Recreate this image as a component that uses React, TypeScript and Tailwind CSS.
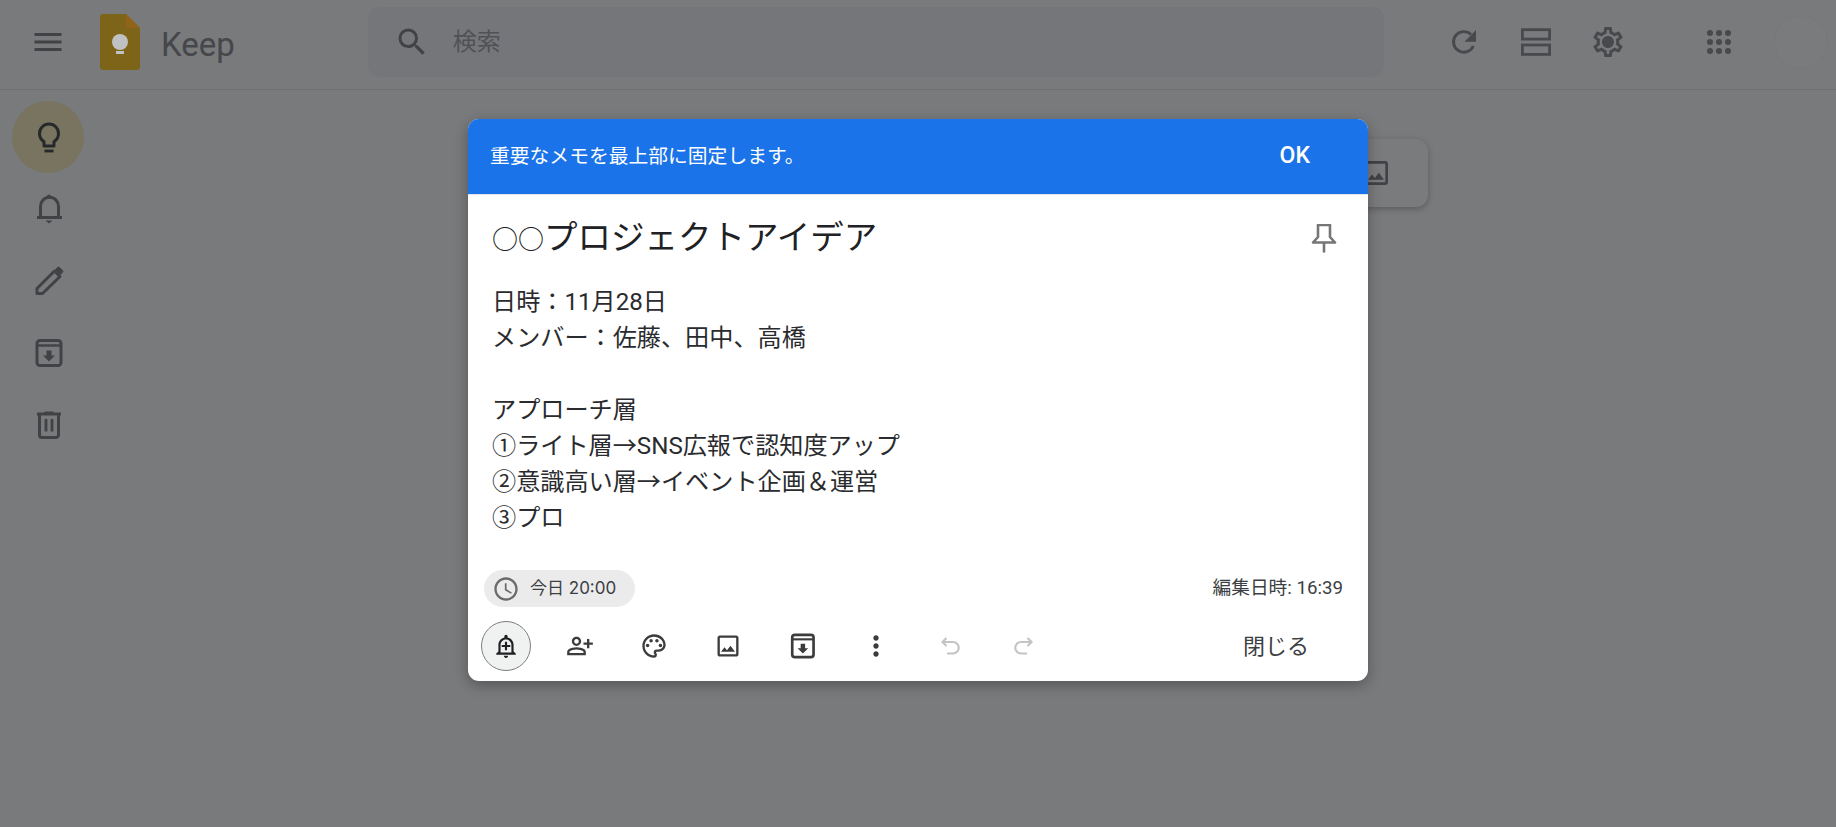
import React from "react";
import {
  MdMenu, MdSearch, MdOutlineSettings,
  MdOutlineImage, MdOutlineAddAlert, MdOutlinePersonAddAlt, MdOutlinePalette,
  MdMoreVert, MdOutlineAccessTime,
} from "react-icons/md";

const font = "[font-family:Roboto,'Noto_Sans_CJK_JP',sans-serif]";

type P = { className?: string };

function BulbIcon({ className }: P) {
  return (
    <svg width="36" height="36" viewBox="0 0 36 36" fill="none" stroke="currentColor" strokeWidth="3" strokeLinejoin="round" className={className}>
      <path d="M14 27v-4.300C11 20.800 9.500 17.800 9.500 14.500a9.500 9.500 0 0 1 19 0c0 3.300-1.500 6.300-4.500 8.200V27z" />
      <path d="M14.500 32h9" strokeWidth="2.800" />
    </svg>
  );
}
function BellIcon() {
  return (
    <svg width="36" height="36" viewBox="0 0 36 36" fill="none" stroke="currentColor" strokeWidth="3">
      <path d="M10.500 26V15.500a8.500 8.800 0 0 1 18 0V26" />
      <path d="M7 26.500h25" />
      <circle cx="19" cy="5.500" r="2.100" fill="currentColor" stroke="none" />
      <path d="M15.500 29.500h7l-3.500 3z" fill="currentColor" stroke="none" />
    </svg>
  );
}
function PencilIcon() {
  return (
    <svg width="36" height="36" viewBox="0 0 36 36" fill="none" stroke="currentColor" strokeWidth="3" strokeLinejoin="round">
      <path d="M7 30.500V25.500L24.500 8l5.500 5.500L12.500 30.500z" />
      <path d="M25.500 6.500l1.800-1.800a1.800 1.800 0 0 1 2.500 0l2.500 2.500a1.800 1.800 0 0 1 0 2.500l-1.800 1.800z" fill="currentColor" strokeWidth="1" />
    </svg>
  );
}
function ArchiveIcon({ size = 36 }: { size?: number }) {
  return (
    <svg width={size} height={size} viewBox="0 0 36 36" fill="none" stroke="currentColor" strokeWidth="3">
      <rect x="7" y="5.500" width="24" height="25" rx="3" />
      <path d="M7 10.500h24" strokeWidth="2.400" />
      <path d="M16.500 15.500h5v5h3.500L19 26.500 13 20.500h3.500z" fill="currentColor" stroke="none" />
    </svg>
  );
}
function TrashIcon() {
  return (
    <svg width="36" height="36" viewBox="0 0 36 36" fill="none" stroke="currentColor" strokeWidth="3" strokeLinejoin="round">
      <path d="M7 7h24" />
      <path d="M14.500 5.500h9" strokeWidth="2" />
      <path d="M9.500 7.500V28a2.500 2.500 0 0 0 2.500 2.500h14a2.500 2.500 0 0 0 2.500-2.500V7.500" />
      <path d="M16 12v12.500M22 12v12.500" strokeWidth="2.800" />
    </svg>
  );
}
function RefreshIcon() {
  return (
    <svg width="36" height="36" viewBox="0 0 36 36" fill="none" stroke="currentColor" strokeWidth="2.900">
      <path d="M25 10.500A10.300 10.300 0 1 0 27.300 22" />
      <path d="M30 6v11.700H18.500z" fill="currentColor" stroke="none" />
    </svg>
  );
}
function AgendaIcon() {
  return (
    <svg width="36" height="36" viewBox="0 0 36 36" fill="none" stroke="currentColor" strokeWidth="2.800">
      <rect x="4.400" y="5.700" width="27.200" height="9.400" />
      <rect x="4.400" y="21" width="27.200" height="9.400" />
    </svg>
  );
}
function AppsIcon() {
  const pos = [9, 18, 27];
  return (
    <svg width="36" height="36" viewBox="0 0 36 36" fill="currentColor">
      {pos.map((y) => pos.map((x) => <circle key={`${x}-${y}`} cx={x} cy={y} r="3" />))}
    </svg>
  );
}
function PinIcon() {
  return (
    <svg width="30" height="30" viewBox="0 0 30 30" fill="none" stroke="#767676" strokeWidth="2.600" strokeLinejoin="round" strokeLinecap="round">
      <path d="M9 1h12v12l5 5.500H4L9 13z" />
      <path d="M15 19v8.500" />
    </svg>
  );
}
function UndoIcon({ flip }: { flip?: boolean }) {
  return (
    <svg width="24" height="24" viewBox="0 0 24 24" fill="none" stroke="#c4c4c4" strokeWidth="2.200" className={flip ? "-scale-x-100" : ""}>
      <path d="M8.500 4L4.500 8l4 4" />
      <path d="M4.500 8H15a5 5 0 0 1 0 11.500H9" />
    </svg>
  );
}

function Logo() {
  return (
    <svg width="40" height="56" viewBox="0 0 40 56" className="shrink-0">
      <path d="M3 0H26L40 14V53a3 3 0 0 1-3 3H3a3 3 0 0 1-3-3V3a3 3 0 0 1 3-3z" fill="#7e6418" />
      <path d="M26 0L40 14H26z" fill="#8f6419" />
      <circle cx="20" cy="28" r="8" fill="#c0c1c2" />
      <rect x="16" y="37" width="8" height="3" fill="#c0c1c2" />
    </svg>
  );
}

function SideItem({ children, active }: { children: React.ReactNode; active?: boolean }) {
  return (
    <div className={active ? "flex h-[72px] w-[72px] items-center justify-center rounded-full bg-[#78745f]" : "flex h-[72px] w-[72px] items-center justify-center"}>
      {children}
    </div>
  );
}

function ToolBtn({ children, active }: { children: React.ReactNode; active?: boolean }) {
  return (
    <div className={active ? "flex h-[50px] w-[50px] items-center justify-center rounded-full border border-[#7d7d7d] bg-[#f0f1f1]" : "flex h-[50px] w-[50px] items-center justify-center"}>
      {children}
    </div>
  );
}

export default function App() {
  const lines = [
    "日時：11月28日",
    "メンバー：佐藤、田中、高橋",
    "\u00a0",
    "アプローチ層",
    "①ライト層→SNS広報で認知度アップ",
    "②意識高い層→イベント企画＆運営",
    "③プロ",
  ];
  return (
    <div className={`relative h-[827px] w-full overflow-hidden bg-[#797a7c] ${font}`}>
      <header className="flex h-[90px] items-center border-b border-[#6e6f71] pb-[5px]">
        <div className="flex w-[96px] justify-center text-[#404245]"><MdMenu size={36} /></div>
        <div className="ml-[4px] flex items-center">
          <Logo />
          <span className="ml-[21px] mt-[5px] text-[33px] leading-none text-[#45474a]">Keep</span>
        </div>
        <div className="ml-[133px] flex h-[70px] w-[1016px] items-center rounded-[12px] bg-[#75767a] text-[#404245]">
          <div className="ml-[26px] flex"><MdSearch size={36} /></div>
          <span className="ml-[23px] text-[24px] text-[#505154]">検索</span>
        </div>
        <div className="ml-[62px] flex items-center text-[#48494c]">
          <div className="flex w-[36px] justify-center"><RefreshIcon /></div>
          <div className="ml-[36px] flex w-[36px] justify-center"><AgendaIcon /></div>
          <div className="relative ml-[36px] flex w-[36px] justify-center">
            <MdOutlineSettings size={36} />
            <span className="absolute left-[13px] top-[13px] h-[10px] w-[10px] rounded-full bg-[#48494c]" />
          </div>
          <div className="ml-[75px] flex w-[36px] justify-center"><AppsIcon /></div>
          <div className="ml-[38px] h-[52px] w-[52px] rounded-full bg-[#7a7b7d] shadow-[0_0_1px_#737476]" />
        </div>
      </header>

      <div className="flex">
        <nav className="ml-[12px] mt-[11px] flex w-[72px] flex-col text-[#404245]">
          <SideItem active><BulbIcon className="text-[#26282b]" /></SideItem>
          <SideItem><BellIcon /></SideItem>
          <SideItem><PencilIcon /></SideItem>
          <SideItem><ArchiveIcon /></SideItem>
          <SideItem><TrashIcon /></SideItem>
        </nav>
        <main className="ml-[744px] mt-[49px] flex h-[68px] w-[600px] items-center justify-end rounded-[12px] bg-[#7a7b7d] pr-[36px] shadow-[0_2px_6px_rgba(0,0,0,0.25)]">
          <MdOutlineImage size={32} className="text-[#404245]" />
        </main>
      </div>

      <section className="absolute left-[468px] top-[119px] flex h-[562px] w-[900px] flex-col overflow-hidden rounded-[11px] bg-white shadow-[0_4px_14px_rgba(0,0,0,0.3)]">
        <div className="flex h-[76px] shrink-0 items-center justify-between border-b border-[#e4e4e4] bg-[#1a73e8] pl-[22px] pr-[58px] text-white">
          <span className="text-[19.8px]">重要なメモを最上部に固定します。</span>
          <span className="text-[23px] font-medium">OK</span>
        </div>
        <div className="flex h-[87px] shrink-0 items-center justify-between pl-[24px] pr-[29px]">
          <span className="text-[33.5px] text-[#202124]"><span className="text-[26px]">○○</span>プロジェクトアイデア</span>
          <PinIcon />
        </div>
        <div className="mt-[2px] pl-[24px] text-[24.15px] leading-[36px] text-[#2a2b2e]">
          {lines.map((l, i) => (<div key={i}>{l}</div>))}
        </div>
        <div className="mt-[34px] flex items-center justify-between pl-[16px] pr-[25px]">
          <div className="flex h-[37px] w-[151px] items-center rounded-full bg-[#ebebeb]">
            <MdOutlineAccessTime size={28} className="ml-[8px] text-[#6b6b6b]" />
            <span className="ml-[10px] font-['Inter','Noto_Sans_CJK_JP',sans-serif] text-[17px] text-[#3c4043]">今日 20:00</span>
          </div>
          <span className="text-[18.7px] text-[#3c4043]">編集日時: 16:39</span>
        </div>
        <div className="mt-[14px] flex items-center pl-[13px]">
          <div className="flex gap-[24px] text-[#3c3c3c]">
            <ToolBtn active><MdOutlineAddAlert size={26} className="text-[#202124]" /></ToolBtn>
            <ToolBtn><MdOutlinePersonAddAlt size={28} /></ToolBtn>
            <ToolBtn><MdOutlinePalette size={28} /></ToolBtn>
            <ToolBtn><MdOutlineImage size={28} /></ToolBtn>
            <ToolBtn><ArchiveIcon size={32} /></ToolBtn>
            <ToolBtn><MdMoreVert size={32} /></ToolBtn>
            <ToolBtn><UndoIcon /></ToolBtn>
            <ToolBtn><UndoIcon flip /></ToolBtn>
          </div>
          <span className="ml-[194px] text-[22px] text-[#3c4043]">閉じる</span>
        </div>
      </section>
    </div>
  );
}
